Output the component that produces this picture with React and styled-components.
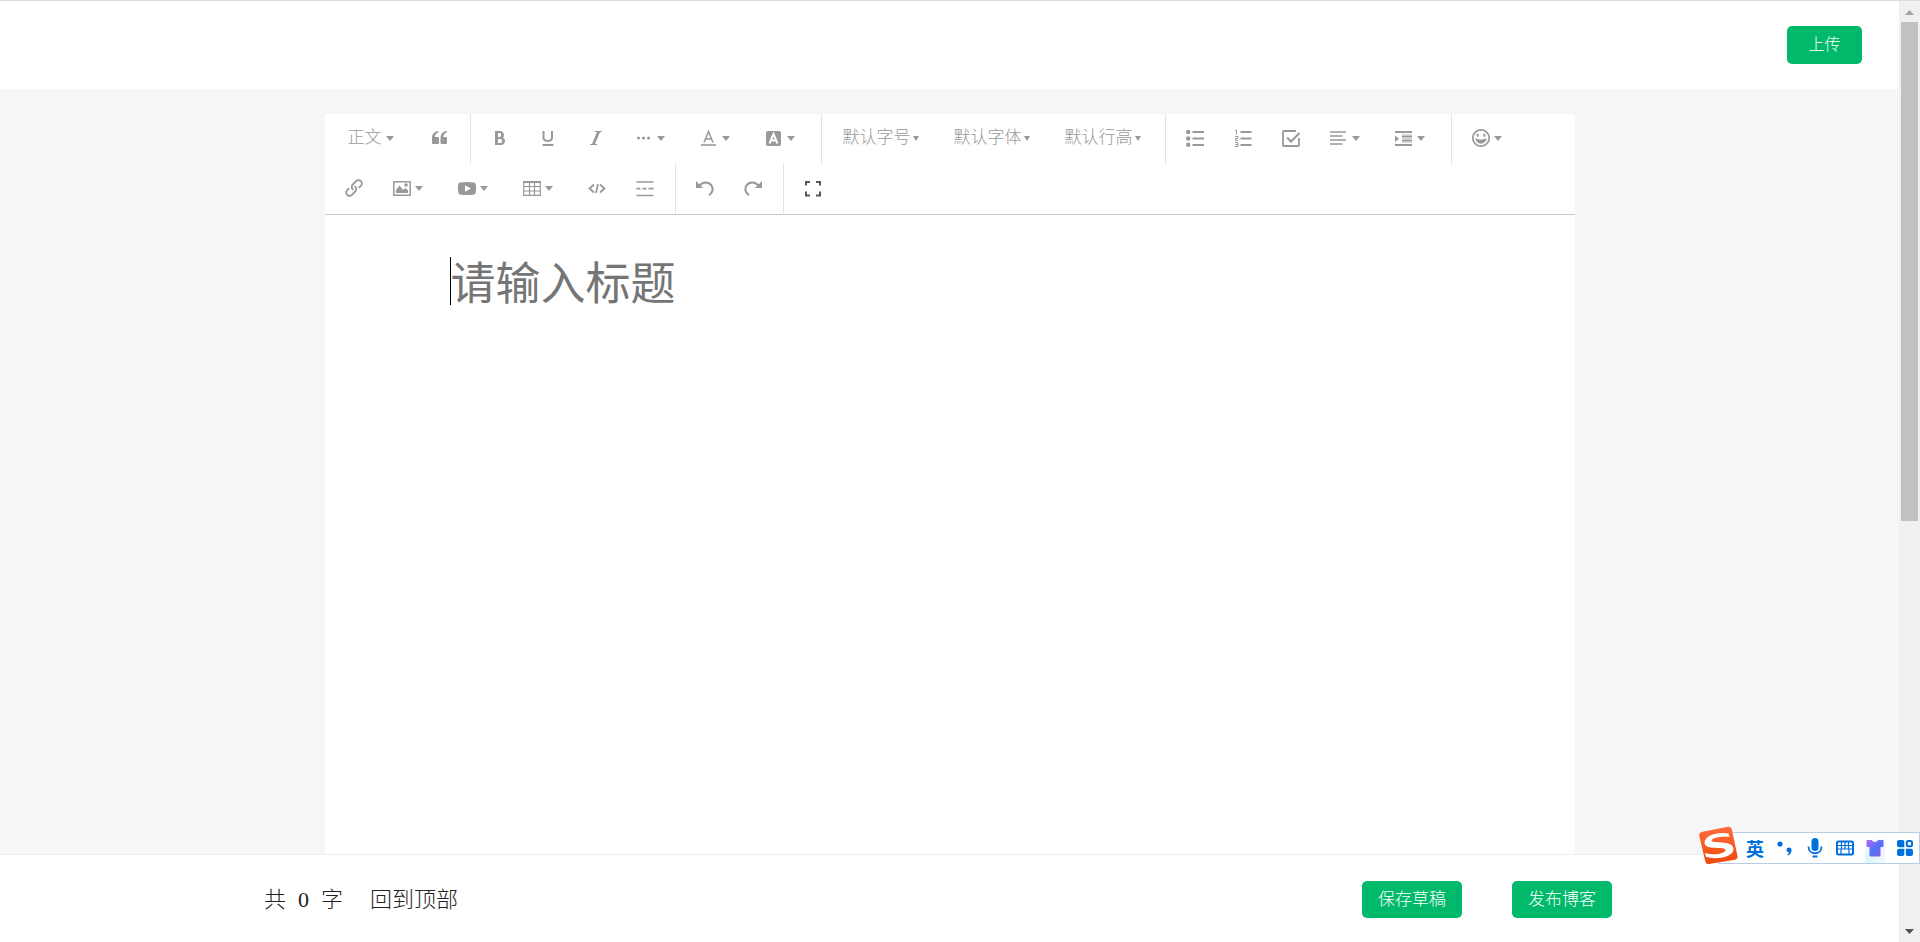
import React from "react";
import styled, { createGlobalStyle } from "styled-components";
import { ImBold, ImItalic, ImHappy, ImLink } from "react-icons/im";

const GlobalStyle = createGlobalStyle`
  * { box-sizing: border-box; }
  body {
    margin: 0;
    background: #f4f6f8;
    font-family: "Liberation Serif", "Noto Sans CJK SC", sans-serif;
    font-weight: 300;
  }
  button, input, select { font: inherit; }
`;

const Window = styled.div`
  display: flex;
  height: 100vh;
  border-top: 1px solid #dcdcdc;
`;

const Page = styled.div`
  flex: 1;
  min-width: 0;
  display: flex;
  flex-direction: column;
`;

const Header = styled.header`
  display: flex;
  justify-content: flex-end;
  align-items: center;
  height: 88px;
  padding-right: 37px;
  background: #fff;
  border-radius: 0 0 4px 4px;
`;

const GreenButton = styled.button`
  min-width: ${(p) => (p.$wide ? 100 : 75)}px;
  height: ${(p) => (p.$wide ? 37 : 38)}px;
  padding: 0;
  border: 0;
  border-radius: 5px;
  background: #01b96b;
  color: #fff;
  font-size: ${(p) => (p.$wide ? 17 : 16)}px;
  line-height: 24px;
  cursor: pointer;
`;

const Main = styled.main`
  flex: 1;
  display: flex;
  justify-content: center;
  padding-top: 25px;
`;

const Editor = styled.section`
  display: flex;
  flex-direction: column;
  width: 1250px;
  max-width: 100%;
  background: #fff;
`;

const Toolbar = styled.div`
  display: flex;
  flex-wrap: wrap;
  border-bottom: 1px solid #c9c9c9;
`;

const Group = styled.div`
  display: flex;
  gap: ${(p) => p.$gap || 0}px;
  height: 50px;
  padding: 0 6px 0 5px;
  border-right: ${(p) => (p.$last ? 0 : 1)}px solid #e3e3e3;
`;

const Tool = styled.button`
  display: flex;
  align-items: center;
  gap: 4px;
  width: ${(p) => (p.$menu ? 65 : 48)}px;
  height: 48px;
  padding: 0 0 0 15px;
  border: 0;
  background: none;
  color: ${(p) => (p.$dark ? "#595959" : "#999")};
  cursor: pointer;
`;

const Icon = styled.svg`
  flex: none;
  width: 18px;
  height: 18px;
  fill: none;
  stroke: currentColor;
  stroke-width: 2;
`;

const SolidIcon = styled.span`
  display: flex;
  justify-content: center;
  flex: none;
  width: 18px;
  font-size: ${(p) => (p.$large ? 18 : 16)}px;
`;

const Arrow = styled.svg`
  flex: none;
  width: ${(p) => (p.$small ? 6 : 8)}px;
  height: 5px;
  fill: currentColor;
  pointer-events: none;
`;

const Choice = styled.label`
  display: flex;
  align-items: center;
  gap: ${(p) => (p.$small ? 2 : 4)}px;
  width: ${(p) => (p.$small ? 110 : 86)}px;
  height: 48px;
  padding-left: ${(p) => (p.$small ? 16 : 18)}px;
  color: #999;
`;

const Select = styled.select`
  appearance: none;
  padding: 0;
  border: 0;
  background: none;
  color: inherit;
  font-size: 17px;
  line-height: 24px;
`;

const Body = styled.div`
  flex: 1;
  padding: 42px 10% 0;
`;

const TitleInput = styled.input`
  display: block;
  width: 100%;
  height: 48px;
  padding: 0;
  border: 0;
  border-left: 1px solid #000;
  outline: 0;
  background: none;
  color: #333;
  font-family: "Noto Sans CJK SC", sans-serif;
  font-size: 45px;
  font-weight: 400;
  line-height: 48px;
  &::placeholder { color: #757575; opacity: 1; }
`;

const Footer = styled.footer`
  display: flex;
  justify-content: space-between;
  align-items: center;
  height: 88px;
  padding: 2px 287px 0 264px;
  border-top: 1px solid #eceef0;
  background: #fff;
`;

const FooterInfo = styled.div`
  display: flex;
  gap: 27px;
  color: #222;
  font-size: 22px;
  line-height: 32px;
`;

const Count = styled.span`
  display: flex;
  gap: 12px;
`;

const TopLink = styled.a`
  color: inherit;
  text-decoration: none;
`;

const Actions = styled.div`
  display: flex;
  gap: 50px;
`;

const Scrollbar = styled.div`
  display: flex;
  flex-direction: column;
  align-items: center;
  width: 21px;
  background: #f0f0f0;
`;

const ScrollArrow = styled.svg`
  flex: none;
  width: 17px;
  height: 21px;
  fill: ${(p) => p.$color};
`;

const Track = styled.div`
  flex: 1;
  width: 17px;
  display: grid;
  grid-template-rows: 5fr 4fr;
`;

const Thumb = styled.div`
  background: #c1c1c1;
`;

const ImeBar = styled.div`
  position: fixed;
  right: 0;
  bottom: 78px;
  display: flex;
  align-items: center;
  gap: 10px;
  height: 32px;
  padding: 0 4px 0 26px;
  border: 1px solid #b7cde3;
  background: #fff;
  color: #0070dc;
`;

const ImeLogo = styled.svg`
  position: absolute;
  left: -21px;
  top: -7px;
  width: 40px;
  height: 39px;
`;

const ImeText = styled.button`
  width: 20px;
  padding: 0;
  border: 0;
  background: none;
  color: inherit;
  font-family: "Noto Sans CJK SC", sans-serif;
  font-size: 18px;
  font-weight: 700;
  line-height: 26px;
`;

const ImeButton = styled.button`
  display: flex;
  padding: 0;
  border: 0;
  background: none;
  color: inherit;
`;

const ImeIcon = styled.svg`
  width: 20px;
  height: 20px;
  fill: currentColor;
`;

const ShirtGlow = styled(ImeButton)`
  height: 30px;
  width: 20px;
  align-items: center;
  background: radial-gradient(circle at 20% 90%, #d9f5fb, transparent 65%),
    radial-gradient(circle at 90% 60%, #fbeaff, transparent 60%);
`;

const DownArrow = ({ small }) => (
  <Arrow $small={small} viewBox="0 0 8 5" preserveAspectRatio="none" aria-hidden="true">
    <path d="M0 0h8L4 5z" />
  </Arrow>
);

const drawings = {
  quote: (
    <g fill="currentColor" stroke="none">
      <path d="M1 14V9C1 5 3.500 2.300 7.500 2v1.300C5.500 4 4 5.500 3.800 8H7q1 0 1 1v5q0 1-1 1H2q-1 0-1-1z" />
      <path d="M9.500 14V9c0-4 2.500-6.700 6.500-7v1.300c-2 .7-3.500 2.200-3.700 4.700h2.700q1 0 1 1v5q0 1-1 1h-4.500q-1 0-1-1z" />
    </g>
  ),
  underline: (
    <>
      <path d="M4.500 2v6.500c0 4.500 8.500 4.500 8.500 0V2" />
      <path d="M3.500 16H14.500" />
    </>
  ),
  more: (
    <g fill="currentColor" stroke="none">
      <circle cx="3.500" cy="9" r="1.500" />
      <circle cx="8.500" cy="9" r="1.500" />
      <circle cx="13.500" cy="9" r="1.500" />
    </g>
  ),
  color: (
    <>
      <path d="M4 13.500 8.500 2.500 13 13.500M5.500 10h6" strokeWidth="1.500" />
      <path d="M1 16h15" strokeWidth="1.600" />
    </>
  ),
  background: (
    <>
      <rect x="1" y="2" width="15" height="15" rx="2" fill="currentColor" stroke="none" />
      <path d="M4.500 14.500 8.500 5 12.500 14.500M6 11.500h5" stroke="#fff" />
    </>
  ),
  bullets: (
    <>
      <g fill="currentColor" stroke="none">
        <circle cx="2.200" cy="3" r="2.200" />
        <circle cx="2.200" cy="9.500" r="2.200" />
        <circle cx="2.200" cy="15.800" r="2.200" />
      </g>
      <path d="M6.500 3H18M6.500 9.500H18M6.500 16H18" />
    </>
  ),
  numbers: (
    <>
      <path d="M6.500 3h11M6.500 9.500h11M6.500 16h11" />
      <path d="M1 1.500h1.500v4M1 7.500h3v2H1.500v2H4M1 13.500h3v4H1M1.500 15.500H4" strokeWidth="1" />
    </>
  ),
  check: (
    <>
      <path d="M14 2H2q-1 0-1 1v13q0 1 1 1h14q1 0 1-1V9" strokeWidth="1.800" />
      <path d="m5 8.500 4 4L17.500 4" />
    </>
  ),
  align: <path d="M0 3h16M0 7h12.500M0 11h16M0 15h12.500" strokeWidth="1.700" />,
  indent: (
    <>
      <path d="M0 3h17M7 7.500h10M7 11.500h10M0 16h17" />
      <path d="M7 5.500h10M7 9.500h10M7 13.500h10" strokeWidth="1" opacity=".4" />
      <path d="M0 6.500 4 9.700 0 13z" fill="currentColor" stroke="none" />
    </>
  ),
  image: (
    <>
      <rect x=".8" y="2.800" width="16.400" height="13.400" strokeWidth="1.500" />
      <path d="M3 14V11l3.500-4.500L10 11l2.500-2L15 11.500V14z" fill="currentColor" stroke="none" />
      <circle cx="13" cy="6" r="1.800" fill="currentColor" stroke="none" />
    </>
  ),
  video: (
    <path
      d="M2 3.500Q9 2.500 16 3.500q1.500.2 1.700 2Q18.500 9.500 17.700 13.500 17.500 15.300 16 15.500 9 16.500 2 15.500.5 15.300.3 13.500-.3 9.500.3 5.500.5 3.700 2 3.500zM7 6.200v6.600l6-3.300z"
      fill="currentColor"
      fillRule="evenodd"
      stroke="none"
    />
  ),
  table: (
    <>
      <path d="M0 3h18" strokeWidth="2" />
      <path d="M.7 3v13.300h16.600V3M6.500 3v13M11.500 3v13M.7 7.500h16.600M.7 12h16.600" strokeWidth="1.200" />
    </>
  ),
  code: <path d="M6 5.500 1.500 9.500 6 13.500M12 5.500l4.500 4L12 13.500M10 5 8 14" strokeWidth="1.800" />,
  rule: (
    <path d="M.5 3h17M.5 16.500h17M.5 9.700h4M6.500 9.700h4M12.500 9.700h5" strokeWidth="1.700" />
  ),
  undo: (
    <>
      <path d="M3.500 6.500C7 2.500 13 2.500 15.500 6.500 17.800 10.500 16 14 13 16.200" />
      <path d="M0 2v7h7z" fill="currentColor" stroke="none" />
    </>
  ),
  redo: (
    <>
      <path d="M14.500 6.500C11 2.500 5 2.500 2.500 6.500.2 10.500 2 14 5 16.200" />
      <path d="M18 2v7h-7z" fill="currentColor" stroke="none" />
    </>
  ),
  fullscreen: <path d="M2 6.500V3h4M12 3h4v3.500M16 12.500v4h-4M6 16.500H2v-4" />,
};

const ToolButton = ({ name, label, menu, dark, large, solid: Solid }) => (
  <Tool type="button" aria-label={label} aria-haspopup={menu ? "menu" : undefined} $menu={menu} $dark={dark}>
    {Solid ? (
      <SolidIcon $large={large}><Solid /></SolidIcon>
    ) : (
      <Icon viewBox="0 0 18 18" aria-hidden="true">{drawings[name]}</Icon>
    )}
    {menu && <DownArrow />}
  </Tool>
);

const Dropdown = ({ text, label, small }) => (
  <Choice $small={small}>
    <Select aria-label={label}>
      <option>{text}</option>
    </Select>
    <DownArrow small={small} />
  </Choice>
);

const EditorToolbar = () => (
  <Toolbar role="toolbar">
    <Group>
      <Dropdown text="正文" label="标题" />
      <ToolButton name="quote" label="引用" />
    </Group>
    <Group>
      <ToolButton solid={ImBold} label="粗体" />
      <ToolButton name="underline" label="下划线" />
      <ToolButton solid={ImItalic} label="斜体" />
      <ToolButton name="more" label="更多" menu />
      <ToolButton name="color" label="文字颜色" menu />
      <ToolButton name="background" label="背景色" menu />
    </Group>
    <Group $gap={1}>
      <Dropdown text="默认字号" label="字号" small />
      <Dropdown text="默认字体" label="字体" small />
      <Dropdown text="默认行高" label="行高" small />
    </Group>
    <Group>
      <ToolButton name="bullets" label="无序列表" />
      <ToolButton name="numbers" label="有序列表" />
      <ToolButton name="check" label="待办" />
      <ToolButton name="align" label="对齐" menu />
      <ToolButton name="indent" label="缩进" menu />
    </Group>
    <Group $last>
      <ToolButton solid={ImHappy} label="表情" menu large />
    </Group>
    <Group>
      <ToolButton solid={ImLink} label="链接" large />
      <ToolButton name="image" label="图片" menu />
      <ToolButton name="video" label="视频" menu />
      <ToolButton name="table" label="表格" menu />
      <ToolButton name="code" label="代码" />
      <ToolButton name="rule" label="分割线" />
    </Group>
    <Group>
      <ToolButton name="undo" label="撤销" />
      <ToolButton name="redo" label="重做" />
    </Group>
    <Group $last>
      <ToolButton name="fullscreen" label="全屏" dark />
    </Group>
  </Toolbar>
);

const InputMethodBar = () => (
  <ImeBar>
    <ImeLogo viewBox="0 0 40 39" aria-hidden="true">
      <defs>
        <linearGradient id="ime-logo" x1="0" y1="0" x2="0" y2="1">
          <stop offset="0" stopColor="#ff6a3c" />
          <stop offset="1" stopColor="#f04a0c" />
        </linearGradient>
      </defs>
      <path d="M3.500 6 30 .8q3-.6 3.800 2.400L39.500 30q.6 3-2.500 3.800L11 38q-3 .6-3.700-2.400L1.300 10Q.7 6.700 3.500 6z" fill="url(#ime-logo)" />
      <path d="M6.500 17C6.500 9 20 5.500 30.500 7.500L31.500 11C24 10 14 11.500 13.500 14.500 13.500 18 34.500 13.500 35.500 22.500 36 31 20 34 8 31L7 27C16 29.500 27 28 27.500 24 27.500 20 7.500 25 6.500 17z" fill="#fff" />
    </ImeLogo>
    <ImeText type="button">英</ImeText>
    <ImeButton type="button" aria-label="标点">
      <ImeIcon viewBox="0 0 20 20">
        <circle cx="5" cy="6" r="2.600" />
        <path d="M11.500 12a2.500 2.500 0 1 1 5 0q0 3.500-3.500 5.500l-.8-1q1.600-1 1.800-2.300-2.500 0-2.500-2.200z" />
      </ImeIcon>
    </ImeButton>
    <ImeButton type="button" aria-label="语音">
      <ImeIcon viewBox="0 0 20 20">
        <rect x="6.500" y="0" width="7" height="13" rx="3.500" />
        <path d="M3.500 8.500c0 9 13 9 13 0M7.500 18.500h5" fill="none" stroke="currentColor" strokeWidth="1.800" />
      </ImeIcon>
    </ImeButton>
    <ImeButton type="button" aria-label="软键盘">
      <ImeIcon viewBox="0 0 20 20">
        <rect x="2" y="3.500" width="16" height="13" rx="1.500" fill="none" stroke="currentColor" strokeWidth="2" />
        <path d="M3 7.500h14M3 11h14M6.500 4v7M10 4v7M13.500 4v7M6 11v5M14 11v5" fill="none" stroke="currentColor" strokeWidth="1.200" />
      </ImeIcon>
    </ImeButton>
    <ShirtGlow type="button" aria-label="皮肤">
      <ImeIcon viewBox="0 0 20 20">
        <defs>
          <linearGradient id="ime-shirt" x1="0" y1="0" x2="1" y2="1">
            <stop offset="0" stopColor="#b765f5" />
            <stop offset=".55" stopColor="#4d72fa" />
            <stop offset="1" stopColor="#8a5dca" />
          </linearGradient>
        </defs>
        <path d="M2.500 2h4q3.500 4 7 0h4q1 0 1 1v5q0 1-1 1h-2v8q0 1.500-1.500 1.500H6Q4.500 18.500 4.500 17V9h-2q-1 0-1-1V3q0-1 1-1z" fill="url(#ime-shirt)" />
      </ImeIcon>
    </ShirtGlow>
    <ImeButton type="button" aria-label="工具箱">
      <ImeIcon viewBox="0 0 20 20">
        <path d="M4 2h3.500q1.800 0 1.800 1.800v5.500H4Q2 9.300 2 7.300V4Q2 2 4 2zM4 10.800h5.300v5.400q0 1.800-1.800 1.800H4q-2 0-2-2v-3q0-2.200 2-2.200zM10.800 10.800H16q2 0 2 2V16q0 2-2 2h-3.300q-1.900 0-1.900-1.800z" />
        <rect x="11.800" y="3" width="5.200" height="5.200" rx="1.500" fill="none" stroke="currentColor" strokeWidth="2" />
      </ImeIcon>
    </ImeButton>
  </ImeBar>
);

export default function App() {
  return (
    <>
      <GlobalStyle />
      <Window>
        <Page>
          <Header>
            <GreenButton type="button">上传</GreenButton>
          </Header>
          <Main>
            <Editor>
              <EditorToolbar />
              <Body>
                <TitleInput type="text" aria-label="标题" placeholder="请输入标题" />
              </Body>
            </Editor>
          </Main>
          <Footer>
            <FooterInfo>
              <Count>
                <span>共</span>
                <span>0</span>
                <span>字</span>
              </Count>
              <TopLink href="#">回到顶部</TopLink>
            </FooterInfo>
            <Actions>
              <GreenButton type="button" $wide>保存草稿</GreenButton>
              <GreenButton type="button" $wide>发布博客</GreenButton>
            </Actions>
          </Footer>
        </Page>
        <Scrollbar aria-hidden="true">
          <ScrollArrow viewBox="0 0 17 21" $color="#a3a3a3"><path d="M4 14h9L8.500 9z" /></ScrollArrow>
          <Track><Thumb /></Track>
          <ScrollArrow viewBox="0 0 17 21" $color="#505050"><path d="M4 8h9l-4.500 5z" /></ScrollArrow>
        </Scrollbar>
      </Window>
      <InputMethodBar />
    </>
  );
}
